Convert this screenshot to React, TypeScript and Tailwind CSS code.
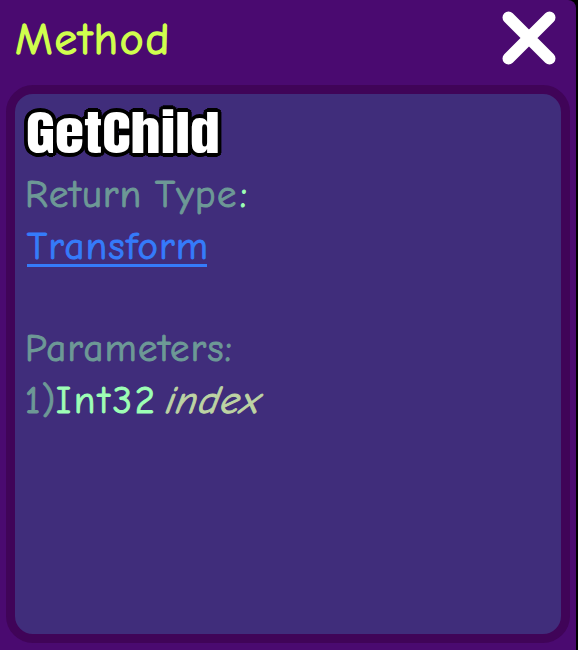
import type { ReactNode } from "react";

const comic = "font-['Comic_Sans_MS','Comic_Neue',Inter,sans-serif] [font-feature-settings:'cv11','cv08']";

function Line({ children }: { children?: ReactNode }) {
  return <div className="flex h-[51.5px] items-center whitespace-pre pt-[8px] text-[38.5px] leading-none tracking-[1.4px] [-webkit-text-stroke:1px_currentColor]">{children}</div>;
}

export default function App() {
  return (
    <main className={`h-[650px] w-[578px] bg-black ${comic}`}>
      <section className="flex h-full w-[576px] flex-col rounded-tr-lg bg-[#4a0a70]">
        <header className="flex h-[85px] shrink-0 items-start justify-between pl-[15px] pr-5 pt-[10px]">
          <h1 className="mt-[2px] text-[45px] leading-[54px] tracking-[1.9px] text-[#d0ff4d] [-webkit-text-stroke:1.4px_currentColor]">Method</h1>
          <button aria-label="Close" className="h-14 w-[54px]">
            <svg viewBox="0 0 54 56" className="h-full w-full" fill="none" stroke="#fff" strokeWidth="12" strokeLinecap="round">
              <path d="M6.5 7.5 47.5 48.5M47.5 7.5 6.5 48.5" />
            </svg>
          </button>
        </header>
        <div className="ml-[6px] h-[558px] w-[564px] rounded-[27px] border-[9px] border-[#400458] bg-[#402d7b] pl-[10px] pt-[10px]">
          <h2 className="flex h-[61px] items-center whitespace-nowrap pb-[2px] pl-px">
            <span className="origin-left scale-x-[1.25] font-[Impact,Anton,Oswald,Inter,sans-serif] text-[47.5px] font-normal leading-none tracking-[0.1px] text-white [text-shadow:3px_0_#000,-3px_0_#000,0_3.7px_#000,0_-3.7px_#000,2.6px_1.9px_#000,-2.6px_1.9px_#000,2.6px_-1.9px_#000,-2.6px_-1.9px_#000,1.5px_3.2px_#000,-1.5px_3.2px_#000,1.5px_-3.2px_#000,-1.5px_-3.2px_#000]">GetChild</span>
          </h2>
          <Line>
            <span className="w-[130px] text-[#6d9996]">Return</span>
            <span className="w-[85px] text-[#6d9996]">Type</span>
            <span className="text-[#9dffb5]">:</span>
          </Line>
          <Line>
            <a className="ml-[2px] block h-[42px] w-[180px] border-b-[3px] border-[#357bfa] pt-[3px] text-[#357bfa]">Transform</a>
          </Line>
          <Line />
          <Line>
            <span className="text-[#6d9996]">Parameters:</span>
          </Line>
          <Line>
            <span className="w-[31px] text-[#6d9996]">1)</span>
            <span className="w-[111px] tracking-[3px] text-[#9dffb5]">Int32</span>
            <i className="not-italic -skew-x-[20deg] text-[#bdd3a3]">index</i>
          </Line>
        </div>
      </section>
    </main>
  );
}
